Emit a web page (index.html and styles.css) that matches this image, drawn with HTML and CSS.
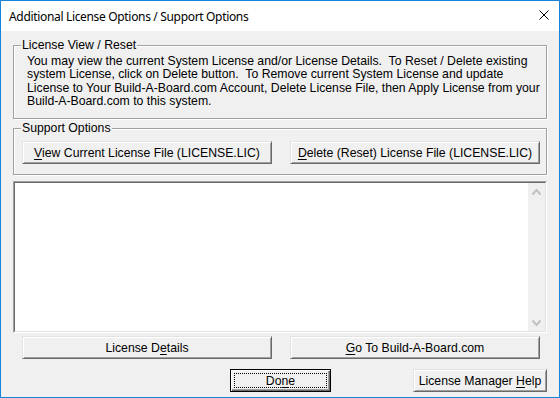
FILE: index.html
```html
<!DOCTYPE html>
<html lang="en">
  <head>
    <meta charset="UTF-8" />
    <title>Additional License Options / Support Options</title>
    <link rel="stylesheet" href="styles.css">
  </head>

  <body>
    <div class="window">
      <!-- title bar -->
      <div class="titlebar">
        <span class="title">Additional License Options / Support Options</span>
        <svg class="close" width="10" height="10" viewBox="0 0 10 10">
          <path d="M0.5 0.5 L9.5 9.5 M9.5 0.5 L0.5 9.5" stroke="#000" stroke-width="1" fill="none" />
        </svg>
      </div>

      <div class="client">
        <fieldset class="group group-view">
          <legend>License View / Reset</legend>
          <p class="info">
            You may view the current System License and/or License Details.&nbsp; To Reset / Delete existing<br>
            system License, click on Delete button.&nbsp; To Remove current System License and update<br>
            License to Your Build-A-Board.com Account, Delete License File, then Apply License from your<br>
            Build-A-Board.com to this system.
          </p>
        </fieldset>

        <fieldset class="group group-support">
          <legend>Support Options</legend>
          <div class="btn-row">
            <button class="btn wide"><u>V</u>iew Current License File (LICENSE.LIC)</button>
            <button class="btn wide"><u>D</u>elete (Reset) License File (LICENSE.LIC)</button>
          </div>
        </fieldset>

        <div class="textbox">
          <div class="textbox-inner">
            <div class="text-area"></div>
            <div class="scrollbar">
              <div class="scroll-btn">
                <svg width="17" height="17" viewBox="0 0 17 17">
                  <path d="M4.5 11.5 L8.5 7 L12.5 11.5" stroke="#c0c0c0" stroke-width="2" fill="none" />
                </svg>
              </div>
              <div class="scroll-btn">
                <svg width="17" height="17" viewBox="0 0 17 17">
                  <path d="M4.5 6.5 L8.5 11 L12.5 6.5" stroke="#c0c0c0" stroke-width="2" fill="none" />
                </svg>
              </div>
            </div>
          </div>
        </div>

        <div class="btn-row main-row">
          <button class="btn wide">License D<u>e</u>tails</button>
          <button class="btn wide"><u>G</u>o To Build-A-Board.com</button>
        </div>

        <div class="footer-row">
          <button class="btn done">Do<u>n</u>e</button>
          <button class="btn help">License Manager <u>H</u>elp</button>
        </div>
      </div>
    </div>
  </body>
</html>
```

FILE: styles.css
```css
html,
body {
  margin: 0;
  padding: 0;
}

body {
  font-family: "Liberation Sans", Arial, sans-serif;
  font-size: 12.25px;
  color: #000;
  background-color: #f0f0f0;
}

.window {
  width: 560px;
  height: 398px;
  box-sizing: border-box;
  border: 1px solid #1883d7;
  display: flex;
  flex-direction: column;
  background-color: #f0f0f0;
}

/* title bar */
.titlebar {
  height: 30px;
  flex: none;
  display: flex;
  align-items: center;
  padding: 0 10px 0 8px;
  background-color: #fff;
}

.title {
  flex: 1;
  font-family: "Noto Sans", sans-serif;
  font-size: 12px;
  letter-spacing: -0.33px;
  color: #000;
}

.close {
  margin-top: -2px;
}

.client {
  flex: 1;
  padding: 0 12px;
}

/* group boxes */
.group {
  margin: 0;
  min-width: 0;
  border: 1px solid #a0a0a0;
  box-shadow: inset 1px 1px 0 #fff, 1px 1px 0 #fff;
}

.group legend {
  font-size: 12.25px;
  line-height: 14px;
  padding: 0 1px;
  background-color: #f0f0f0;
}

.group-view {
  margin-top: 7px;
  padding: 3px 13px 10px 13px;
}

.group-view legend {
  margin-left: -6px;
}

.info {
  margin: 0;
  line-height: 13.33px;
  white-space: nowrap;
}

.group-support {
  margin-top: 2px;
  padding: 6px 6px 10px 8px;
}

.group-support legend {
  margin-left: -1px;
}

/* buttons */
.btn-row {
  display: flex;
  gap: 18px;
}

.btn {
  position: relative;
  height: 23px;
  box-sizing: border-box;
  padding: 0;
  font-family: inherit;
  font-size: 12.25px;
  color: #000;
  background-color: #f0f0f0;
  border: 1px solid;
  border-color: #e3e3e3 #696969 #696969 #e3e3e3;
  box-shadow: inset 1px 1px 0 #fff, inset -1px -1px 0 #a0a0a0;
  text-align: center;
}

.btn u {
  text-decoration-thickness: 1px;
  text-underline-offset: 2px;
}

.wide {
  width: 250px;
}

.main-row {
  margin-top: 3px;
  padding-left: 9px;
}

.footer-row {
  margin-top: 10px;
  display: flex;
}

.done {
  width: 101px;
  margin-left: 217px;
  border-color: #000;
  box-shadow: inset 1px 1px 0 #fff, inset -1px -1px 0 #696969,
    inset -2px -2px 0 #a0a0a0;
}

/* focus rectangle */
.done::after {
  content: "";
  position: absolute;
  top: 3px;
  left: 3px;
  right: 3px;
  bottom: 3px;
  border: 1px dotted #000;
}

.help {
  width: 134px;
  margin-left: auto;
}

/* text box */
.textbox {
  margin-top: 6px;
  height: 152px;
  box-sizing: border-box;
  border: 1px solid;
  border-color: #a0a0a0 #fff #fff #a0a0a0;
}

.textbox-inner {
  height: 100%;
  box-sizing: border-box;
  border: 1px solid;
  border-color: #696969 #e3e3e3 #e3e3e3 #696969;
  display: flex;
}

.text-area {
  flex: 1;
  background-color: #fff;
}

.scrollbar {
  width: 17px;
  display: flex;
  flex-direction: column;
  justify-content: space-between;
  background-color: #f0f0f0;
}

.scroll-btn {
  height: 17px;
}

.scroll-btn svg {
  display: block;
}
```
